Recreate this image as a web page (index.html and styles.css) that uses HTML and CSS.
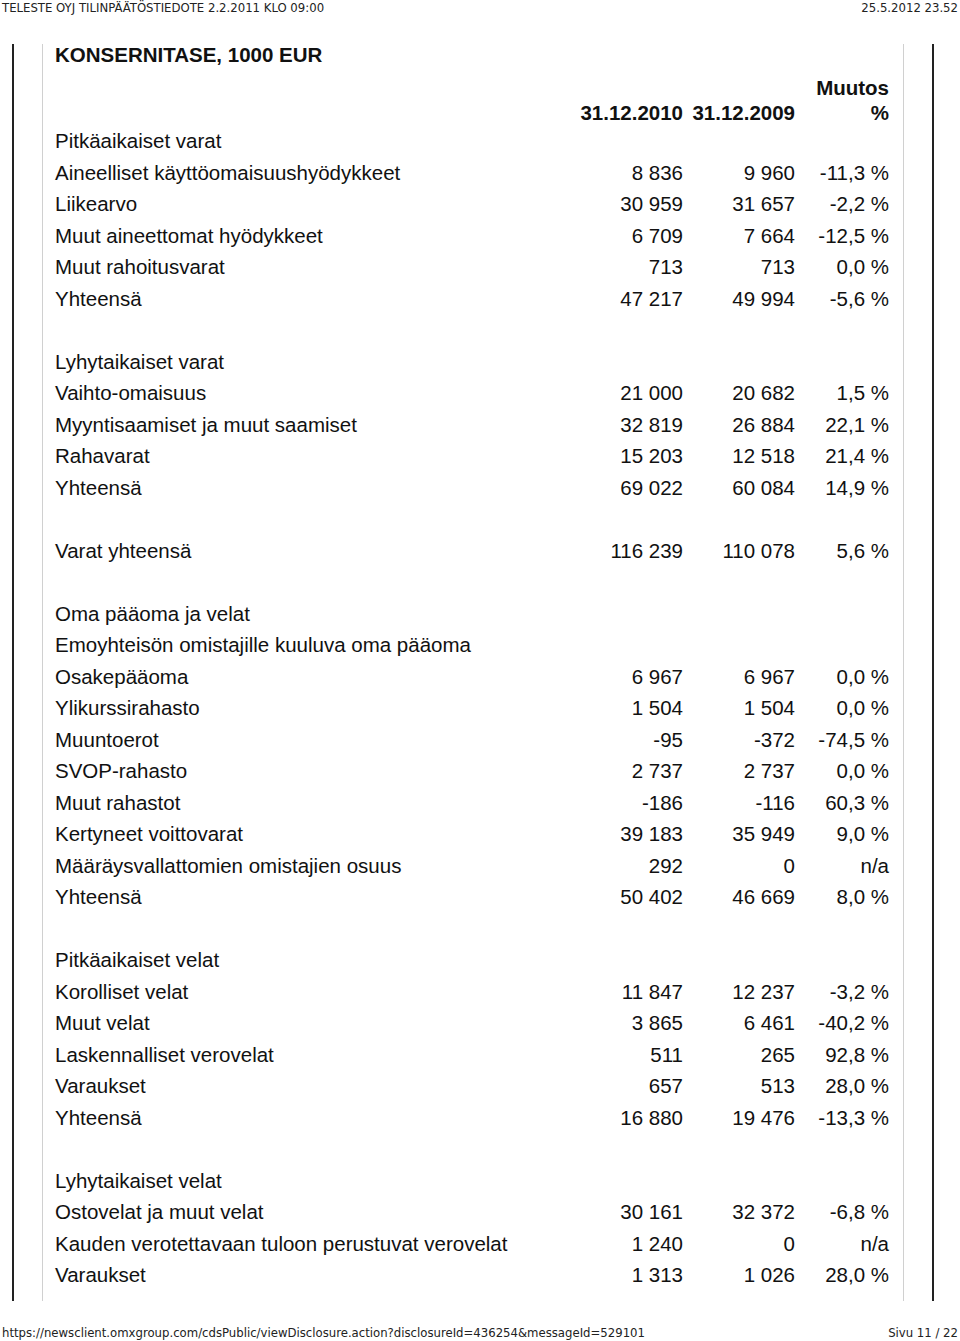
FILE: index.html
```html
<!DOCTYPE html>
<html lang="fi">
<head>
<meta charset="utf-8">
<title>Konsernitase</title>
<link rel="stylesheet" href="styles.css">
</head>
<body>
<div class="page-head">
  <span>TELESTE OYJ TILINPÄÄTÖSTIEDOTE 2.2.2011 KLO 09:00</span>
  <span>25.5.2012 23.52</span>
</div>
<div class="frame">
  <div class="inner">
    <h1 class="title">KONSERNITASE, 1000 EUR</h1>
    <div class="row head">
      <div></div>
      <div class="num">31.12.2010</div>
      <div class="num">31.12.2009</div>
      <div class="num">Muutos<br>%</div>
    </div>
    <div class="row"><div>Pitkäaikaiset varat</div></div>
    <div class="row"><div>Aineelliset käyttöomaisuushyödykkeet</div><div class="num">8 836</div><div class="num">9 960</div><div class="num">-11,3 %</div></div>
    <div class="row"><div>Liikearvo</div><div class="num">30 959</div><div class="num">31 657</div><div class="num">-2,2 %</div></div>
    <div class="row"><div>Muut aineettomat hyödykkeet</div><div class="num">6 709</div><div class="num">7 664</div><div class="num">-12,5 %</div></div>
    <div class="row"><div>Muut rahoitusvarat</div><div class="num">713</div><div class="num">713</div><div class="num">0,0 %</div></div>
    <div class="row"><div>Yhteensä</div><div class="num">47 217</div><div class="num">49 994</div><div class="num">-5,6 %</div></div>
    <div class="row"></div>
    <div class="row"><div>Lyhytaikaiset varat</div></div>
    <div class="row"><div>Vaihto-omaisuus</div><div class="num">21 000</div><div class="num">20 682</div><div class="num">1,5 %</div></div>
    <div class="row"><div>Myyntisaamiset ja muut saamiset</div><div class="num">32 819</div><div class="num">26 884</div><div class="num">22,1 %</div></div>
    <div class="row"><div>Rahavarat</div><div class="num">15 203</div><div class="num">12 518</div><div class="num">21,4 %</div></div>
    <div class="row"><div>Yhteensä</div><div class="num">69 022</div><div class="num">60 084</div><div class="num">14,9 %</div></div>
    <div class="row"></div>
    <div class="row"><div>Varat yhteensä</div><div class="num">116 239</div><div class="num">110 078</div><div class="num">5,6 %</div></div>
    <div class="row"></div>
    <div class="row"><div>Oma pääoma ja velat</div></div>
    <div class="row"><div>Emoyhteisön omistajille kuuluva oma pääoma</div></div>
    <div class="row"><div>Osakepääoma</div><div class="num">6 967</div><div class="num">6 967</div><div class="num">0,0 %</div></div>
    <div class="row"><div>Ylikurssirahasto</div><div class="num">1 504</div><div class="num">1 504</div><div class="num">0,0 %</div></div>
    <div class="row"><div>Muuntoerot</div><div class="num">-95</div><div class="num">-372</div><div class="num">-74,5 %</div></div>
    <div class="row"><div>SVOP-rahasto</div><div class="num">2 737</div><div class="num">2 737</div><div class="num">0,0 %</div></div>
    <div class="row"><div>Muut rahastot</div><div class="num">-186</div><div class="num">-116</div><div class="num">60,3 %</div></div>
    <div class="row"><div>Kertyneet voittovarat</div><div class="num">39 183</div><div class="num">35 949</div><div class="num">9,0 %</div></div>
    <div class="row"><div>Määräysvallattomien omistajien osuus</div><div class="num">292</div><div class="num">0</div><div class="num">n/a</div></div>
    <div class="row"><div>Yhteensä</div><div class="num">50 402</div><div class="num">46 669</div><div class="num">8,0 %</div></div>
    <div class="row"></div>
    <div class="row"><div>Pitkäaikaiset velat</div></div>
    <div class="row"><div>Korolliset velat</div><div class="num">11 847</div><div class="num">12 237</div><div class="num">-3,2 %</div></div>
    <div class="row"><div>Muut velat</div><div class="num">3 865</div><div class="num">6 461</div><div class="num">-40,2 %</div></div>
    <div class="row"><div>Laskennalliset verovelat</div><div class="num">511</div><div class="num">265</div><div class="num">92,8 %</div></div>
    <div class="row"><div>Varaukset</div><div class="num">657</div><div class="num">513</div><div class="num">28,0 %</div></div>
    <div class="row"><div>Yhteensä</div><div class="num">16 880</div><div class="num">19 476</div><div class="num">-13,3 %</div></div>
    <div class="row"></div>
    <div class="row"><div>Lyhytaikaiset velat</div></div>
    <div class="row"><div>Ostovelat ja muut velat</div><div class="num">30 161</div><div class="num">32 372</div><div class="num">-6,8 %</div></div>
    <div class="row"><div>Kauden verotettavaan tuloon perustuvat verovelat</div><div class="num">1 240</div><div class="num">0</div><div class="num">n/a</div></div>
    <div class="row"><div>Varaukset</div><div class="num">1 313</div><div class="num">1 026</div><div class="num">28,0 %</div></div>
  </div>
</div>
<div class="page-foot">
  <span>https://newsclient.omxgroup.com/cdsPublic/viewDisclosure.action?disclosureId=436254&amp;messageId=529101</span>
  <span>Sivu 11 / 22</span>
</div>
</body>
</html>
```

FILE: styles.css
```css
html, body {
  margin: 0;
  padding: 0;
  background: #fff;
}
body {
  width: 960px;
  height: 1341px;
  overflow: hidden;
  font-family: "Liberation Sans", Arial, sans-serif;
  color: #111;
}
.page-head, .page-foot {
  display: flex;
  justify-content: space-between;
  font-family: "DejaVu Sans Condensed", "DejaVu Sans", sans-serif;
  font-size: 13px;
  color: #222;
  padding: 0 2px 0 2px;
}
.page-head {
  height: 44px;
  line-height: 16px;
}
.page-foot {
  line-height: 16px;
  padding-top: 24px;
}
.frame {
  margin-left: 12px;
  width: 922px;
  border-left: 2px solid #222;
  border-right: 2px solid #222;
  padding: 0 28px 0 28px;
  box-sizing: border-box;
}
.inner {
  border-left: 1px solid #d0d0d0;
  border-right: 1px solid #d0d0d0;
  padding: 0 14px 10px 12px;
}
.title {
  margin: 0;
  font-size: 20.5px;
  font-weight: bold;
  line-height: 22px;
  height: 22px;
  padding-bottom: 8px;
}
.row {
  display: grid;
  grid-template-columns: 1fr 110px 112px 94px;
  font-size: 20.5px;
  line-height: 31.5px;
  height: 31.5px;
  white-space: nowrap;
}
.row.head {
  font-weight: bold;
  line-height: 25px;
  height: 51px;
  align-items: end;
}
.num {
  text-align: right;
}
```
